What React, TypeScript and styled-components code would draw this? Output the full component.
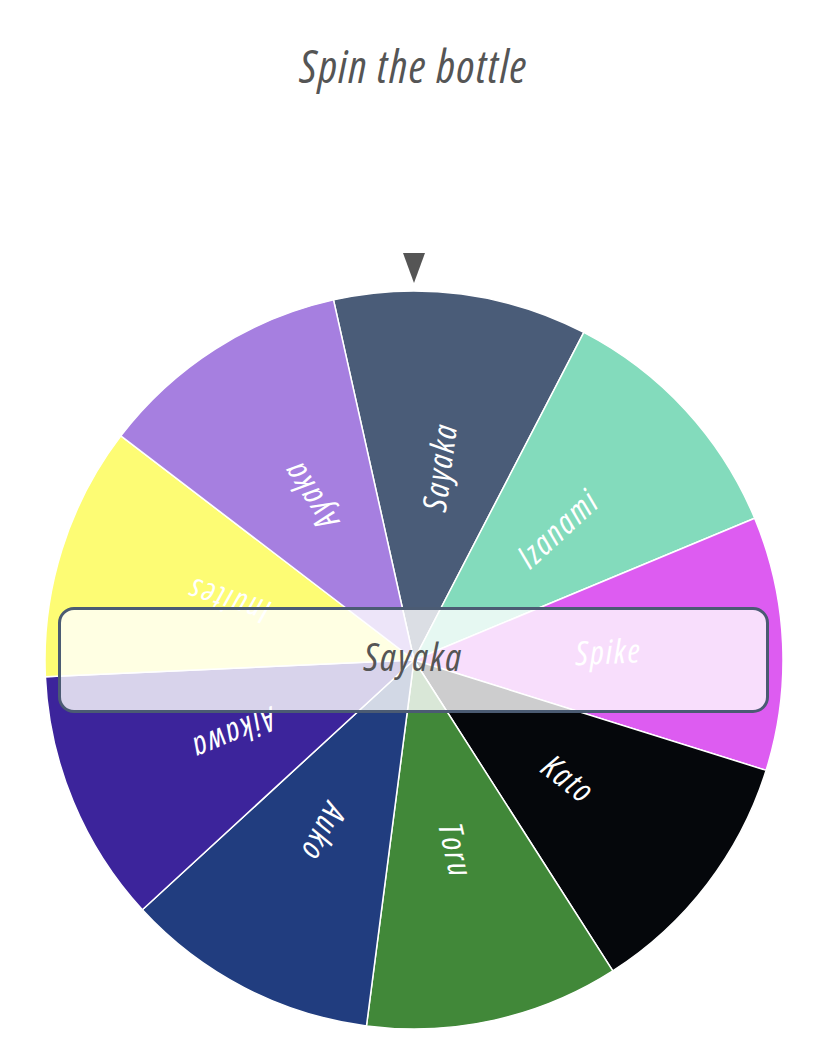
import React from "react"
import styled, { createGlobalStyle } from "styled-components"

const GlobalStyle = createGlobalStyle`
    body {
        margin: 0;
        background: #ffffff;
        font-family: "Open Sans", "DejaVu Sans", sans-serif;
    }
`

const Page = styled.div`
    display: flex;
    flex-direction: column;
    align-items: center;
    padding-top: 39px;
`

const Title = styled.h1`
    margin: 0;
    font-size: 45px;
    line-height: 54px;
    letter-spacing: 1.5px;
    font-style: italic;
    font-weight: normal;
    font-stretch: condensed;
    color: #555555;
`

const Stage = styled.div`
    margin-top: 160px;
    display: flex;
    flex-direction: column;
    align-items: center;
`

const Pointer = styled.svg`
    display: block;
    width: 22px;
    height: 30px;
`

const WheelWrap = styled.div`
    position: relative;
    margin-top: 7px;
    width: 740px;
    height: 740px;
`

const Wheel = styled.svg`
    display: block;
    width: 740px;
    height: 740px;
`

const Label = styled.text`
    fill: #ffffff;
    font-size: 33px;
    letter-spacing: 2px;
    font-style: italic;
    font-stretch: condensed;
`

const Result = styled.div`
    position: absolute;
    left: 14px;
    top: 317px;
    width: 711px;
    height: 106px;
    box-sizing: border-box;
    padding-bottom: 8px;
    border: 3px solid #4b5b73;
    border-radius: 16px;
    background: rgba(255, 255, 255, 0.8);
    display: flex;
    align-items: center;
    justify-content: center;
    font-size: 38px;
    letter-spacing: 1.8px;
    font-style: italic;
    font-stretch: condensed;
    color: #555555;
`

const players = [
    { name: "Sayaka", color: "#4a5c78" },
    { name: "Izanami", color: "#83dbbc" },
    { name: "Spike", color: "#dd5cf1" },
    { name: "Kato", color: "#05070b" },
    { name: "Toru", color: "#418839" },
    { name: "Auko", color: "#213d7f" },
    { name: "Aikawa", color: "#3c249b" },
    { name: "Inuites", color: "#fdfc74" },
    { name: "Ayaka", color: "#a67fe0" },
]

const C = 370
const R = 369
const START = -102.6

const point = (deg: number, r: number) => {
    const a = (deg * Math.PI) / 180
    return [C + r * Math.cos(a), C + r * Math.sin(a)]
}

export default function App() {
    const step = 360 / players.length
    return (
        <>
            <GlobalStyle />
            <Page>
                <Title>Spin the bottle</Title>
                <Stage>
                    <Pointer viewBox="0 0 22 30">
                        <polygon points="0,0 22,0 11,30" fill="#555555" />
                    </Pointer>
                    <WheelWrap>
                        <Wheel viewBox="0 0 740 740">
                            {players.map((p, i) => {
                                const a0 = START + i * step
                                const a1 = a0 + step
                                const [x0, y0] = point(a0, R)
                                const [x1, y1] = point(a1, R)
                                return (
                                    <path
                                        key={p.name}
                                        d={`M${C},${C} L${x0},${y0} A${R},${R} 0 0 1 ${x1},${y1} Z`}
                                        fill={p.color}
                                        stroke="#ffffff"
                                        strokeWidth={1.5}
                                        strokeLinejoin="round"
                                    />
                                )
                            })}
                            {players.map((p, i) => {
                                const mid = START + i * step + step / 2
                                const [x, y] = point(mid, 195)
                                return (
                                    <Label
                                        key={p.name}
                                        x={x}
                                        y={y}
                                        textAnchor="middle"
                                        dominantBaseline="central"
                                        transform={`rotate(${mid} ${x} ${y})`}
                                    >
                                        {p.name}
                                    </Label>
                                )
                            })}
                        </Wheel>
                        <Result>Sayaka</Result>
                    </WheelWrap>
                </Stage>
            </Page>
        </>
    )
}
